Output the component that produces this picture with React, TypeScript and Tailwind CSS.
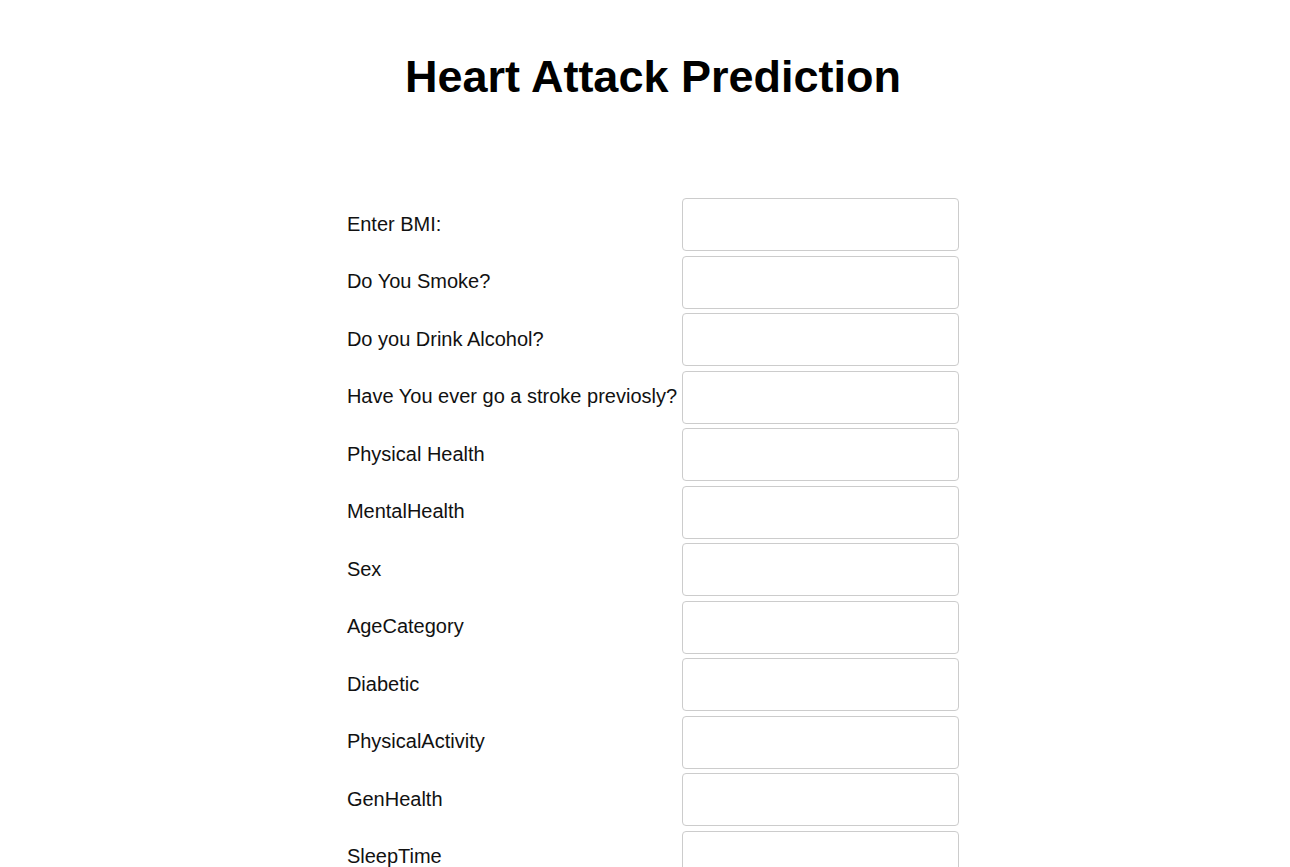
const fields = [
  "Enter BMI:",
  "Do You Smoke?",
  "Do you Drink Alcohol?",
  "Have You ever go a stroke previosly?",
  "Physical Health",
  "MentalHealth",
  "Sex",
  "AgeCategory",
  "Diabetic",
  "PhysicalActivity",
  "GenHealth",
  "SleepTime",
];

export default function App() {
  return (
    <div className="min-h-screen bg-white pl-[16px] font-['Liberation_Sans',Arial,sans-serif] text-black">
      <h1 className="pt-[54px] text-center text-[45px] font-bold leading-none">
        Heart Attack Prediction
      </h1>

      <form className="mx-auto mt-[99px] grid w-fit grid-cols-[auto_277px] items-center gap-x-[5px] gap-y-[4.5px] pb-10">
        {fields.map((label) => (
          <div key={label} className="contents">
            <label className="mb-[2px] text-[20px] leading-none text-[#111]">
              {label}
            </label>
            <input
              type="text"
              className="h-[53px] w-[277px] rounded-[4px] border border-[#cccccc] bg-white px-3 outline-none"
            />
          </div>
        ))}
      </form>
    </div>
  );
}
